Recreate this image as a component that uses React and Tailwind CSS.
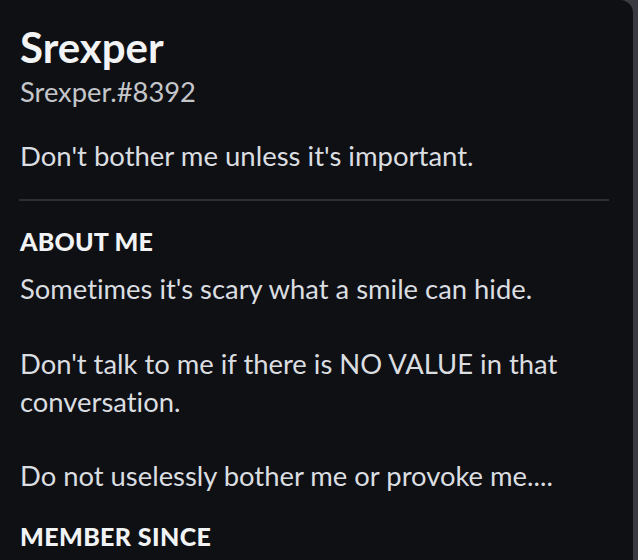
export default function App() {
  const font = { fontFamily: 'Lato, "Noto Sans", sans-serif' };
  return (
    <div className="w-[638px] h-[560px] bg-[#3a3b41] overflow-hidden flex [font-variant-ligatures:none]" style={font}>
      <div className="w-[633px] h-[560px] bg-[#0f1014] rounded-tr-[13px] pl-[20px] pt-[23.75px]">
        <div className="text-[42px] leading-[46px] font-bold text-[#f2f3f5]">Srexper</div>
        <div className="mt-[6.4px] text-[27.3px] leading-[32px] text-[#c4c6ca]">Srexper.#8392</div>
        <div className="mt-[28.5px] text-[27.5px] leading-[37px] text-[#dbdee1]">Don't bother me unless it's important.</div>
        <div className="mt-[25px] ml-[-1px] w-[590px] h-[2px] bg-[#2e2f35]"></div>
        <div className="mt-[25.3px] text-[25px] leading-[30px] font-black tracking-[0.2px] text-[#f2f3f5]">ABOUT ME</div>
        <div className="mt-[14.4px] w-[590px] text-[27.4px] leading-[37.4px] text-[#dbdee1] whitespace-pre-line">
          {"Sometimes it's scary what a smile can hide.\n\nDon't talk to me if there is NO VALUE in that conversation.\n\nDo not uselessly bother me or provoke me...."}
        </div>
        <div className="mt-[26.2px] text-[25px] leading-[30px] font-black tracking-[0.4px] text-[#f2f3f5]">MEMBER SINCE</div>
      </div>
    </div>
  );
}
